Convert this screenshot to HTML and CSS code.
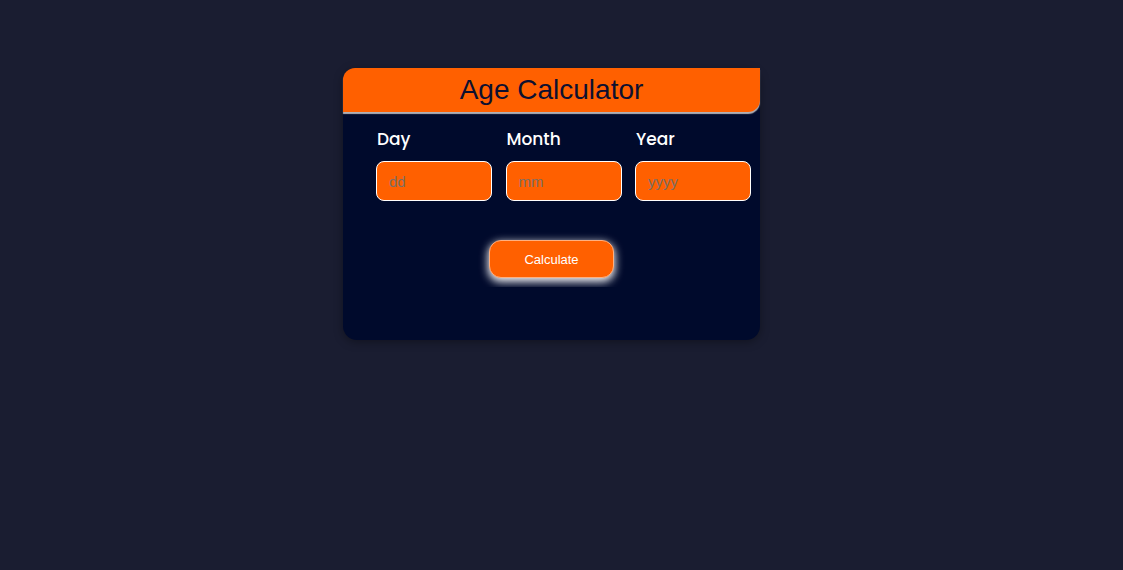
FILE: index.html
```html
<!DOCTYPE html>
<html>
<head>
<meta charset="utf-8">
<link rel="stylesheet" href="styles.css">
</head>
<body>
<div class="card">
  <div class="header">Age Calculator</div>
  <div class="fields">
    <div class="field">
      <label class="label">Day</label>
      <input class="input" type="text" placeholder="dd">
    </div>
    <div class="field">
      <label class="label">Month</label>
      <input class="input" type="text" placeholder="mm">
    </div>
    <div class="field">
      <label class="label">Year</label>
      <input class="input" type="text" placeholder="yyyy">
    </div>
  </div>
  <div class="actions">
    <button class="btn">Calculate</button>
  </div>
</div>
</body>
</html>
```
FILE: styles.css
```css
html, body {
  margin: 0;
  padding: 0;
  background: #1a1d31;
  height: 100%;
}
body {
  padding: 68px 0 0 343px;
  box-sizing: border-box;
}
.card {
  width: 417px;
  height: 272px;
  background: #000a2c;
  border-radius: 14px;
  box-shadow: 0 2px 10px rgba(0, 0, 0, 0.35);
}
.header {
  height: 44px;
  line-height: 43px;
  background: #ff6000;
  border-radius: 12px 0 12px 0;
  box-shadow: 0 2px 1px #b0b0b6;
  text-align: center;
  font-family: "Liberation Sans", Arial, sans-serif;
  font-size: 28px;
  color: #0d1030;
}
.fields {
  display: flex;
  gap: 13.5px;
  padding: 15px 0 0 33px;
}
.field {
  display: flex;
  flex-direction: column;
  width: 116px;
}
.label {
  font-family: "Poppins", Inter, "Noto Sans", sans-serif;
  font-weight: 500;
  font-size: 17px;
  line-height: 24px;
  color: #ffffff;
  margin-bottom: 10px;
  margin-left: 1px;
}
.input {
  box-sizing: border-box;
  width: 116px;
  height: 40px;
  border: 1px solid #ffffff;
  border-radius: 8px;
  background: #ff6000;
  padding: 0 12px;
  font-family: "Liberation Sans", Arial, sans-serif;
  font-size: 15px;
  outline: none;
}
.input::placeholder {
  color: #7c6e64;
}
.actions {
  display: flex;
  justify-content: center;
  overflow: hidden;
  margin-top: 29px;
  padding: 10px 0 9px;
}
.btn {
  width: 125px;
  height: 38px;
  border: 1px solid #ffb080;
  border-radius: 12px;
  background: #ff6000;
  color: #ffffff;
  font-family: "Liberation Sans", Arial, sans-serif;
  font-size: 13px;
  box-shadow: 0 3px 9px 1px rgba(255, 255, 255, 0.95);
  cursor: pointer;
}
```
